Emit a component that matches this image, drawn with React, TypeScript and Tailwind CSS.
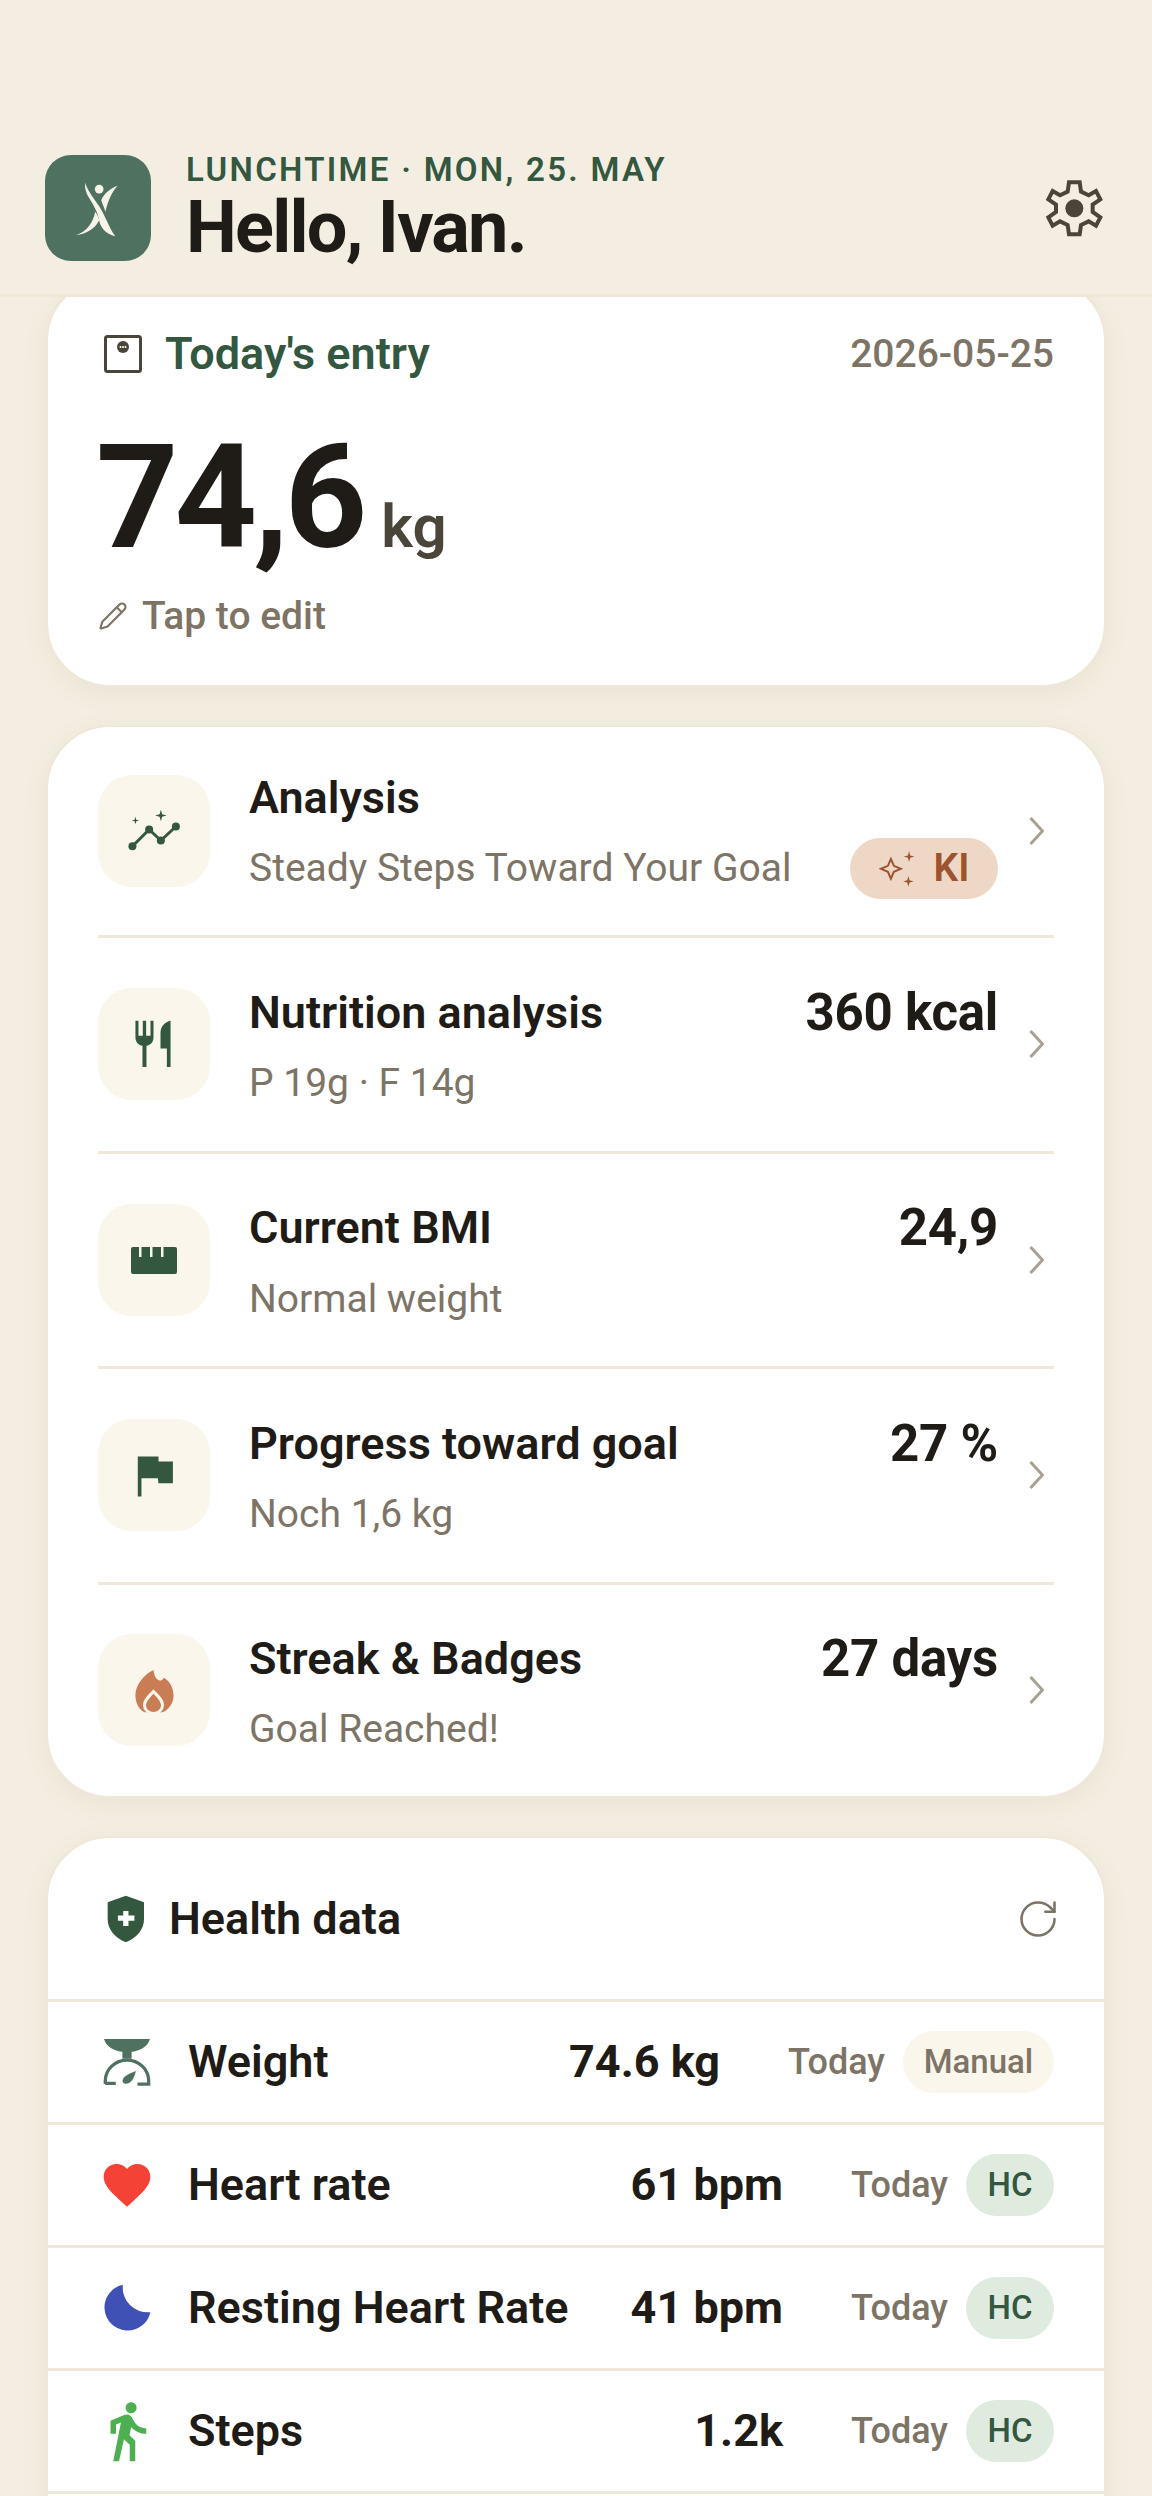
import type { ReactNode } from 'react'
import { MdDirectionsWalk, MdFavorite } from 'react-icons/md'
import { Pencil, RotateCw } from 'lucide-react'

const GREEN = '#34573f'

function Logo() {
  return (
    <div className="size-[106px] shrink-0 rounded-[26px] bg-[#4f7260]">
      <svg viewBox="45 45 317 317" className="size-full" fill="#f7f3e8">
        <circle cx="207" cy="147" r="13" />
        <path d="M165 128C172 150 190 175 205 195C225 225 235 260 255 288C235 283 215 270 208 245C203 215 190 195 178 175C168 160 163 145 165 128Z" />
        <path d="M262 137C240 145 222 160 213 180L226 215C232 185 245 155 262 137Z" />
        <path d="M195 215C190 245 170 275 138 285C170 280 195 265 207 240C205 230 200 222 195 215Z" />
      </svg>
    </div>
  )
}

function Gear() {
  return (
    <svg viewBox="70 55 180 180" className="size-[60px]" fill="none">
      <path
        d="M145 68H177L181 96L204 107L226 94L239 119L216 135V157L239 173L226 198L204 185L181 196L177 224H145L141 196L118 185L96 198L83 173L106 157V135L83 119L96 94L118 107L141 96Z"
        stroke="#4b4438"
        strokeWidth="12"
      />
      <circle cx="161" cy="146" r="27" fill="#4b4438" />
    </svg>
  )
}

function ScaleBox() {
  return (
    <svg viewBox="0 0 38 38" className="size-[38px] shrink-0" fill="none">
      <rect x="1.5" y="1.5" width="35" height="35" rx="2" stroke="#4b4438" strokeWidth="3" />
      <circle cx="19" cy="12" r="6" fill="#4b4438" />
      <circle cx="16.5" cy="12" r="1" fill="#fff" />
      <circle cx="19" cy="12" r="1" fill="#fff" />
      <circle cx="21.5" cy="12" r="1" fill="#fff" />
    </svg>
  )
}

function Star({ x, y, r, fill = GREEN }: { x: number; y: number; r: number; fill?: string }) {
  const k = r * 0.22
  return (
    <path
      d={`M${x} ${y - r}L${x + k} ${y - k}L${x + r} ${y}L${x + k} ${y + k}L${x} ${y + r}L${x - k} ${y + k}L${x - r} ${y}L${x - k} ${y - k}Z`}
      fill={fill}
    />
  )
}

function ChartIcon() {
  return (
    <svg viewBox="24 14 335 335" className="size-full" fill={GREEN}>
      <polyline points="127,227 177,177 212,210 257,168" fill="none" stroke={GREEN} strokeWidth="9" />
      <circle cx="127" cy="227" r="12" />
      <circle cx="177" cy="177" r="12" />
      <circle cx="212" cy="210" r="12" />
      <circle cx="257" cy="168" r="12" />
      <Star x={212} y={135} r={17} />
      <Star x={136} y={150} r={11} />
    </svg>
  )
}

function ForkIcon() {
  return (
    <svg viewBox="24 657 335 335" className="size-full" fill={GREEN}>
      <path d="M136 755H145V800H158V755H168V800H181V755H190V805C190 820 180 828 169 830V893H157V830C146 828 136 820 136 805Z" />
      <path d="M241 755V893H230V838H211V790C211 772 225 758 241 755Z" />
    </svg>
  )
}

function RulerIcon() {
  return (
    <svg viewBox="0 0 112 112" className="size-full">
      <path
        fill={GREEN}
        d="M35 43H77A2 2 0 0 1 79 45V68A2 2 0 0 1 77 70H35A2 2 0 0 1 33 68V45A2 2 0 0 1 35 43ZM41 43V53H43.5V43ZM52 43V53H54.5V43ZM63 43V53H65.5V43Z"
        fillRule="evenodd"
      />
    </svg>
  )
}

function FlagIcon() {
  return (
    <svg viewBox="24 30 335 335" className="size-full" fill={GREEN}>
      <path d="M143 142H205V157H248V222H205L203 207H154V262H143Z" />
    </svg>
  )
}

function FlameIcon() {
  return (
    <svg viewBox="24 677 335 335" className="size-full">
      <path
        fill="#c97d55"
        d="M190 785C192 805 200 820 215 815C220 812 220 808 222 808C240 820 250 840 250 862C250 885 235 905 215 912H165C148 905 136 885 136 860C136 830 160 800 190 785Z"
      />
      <path
        fill="none"
        stroke="#faf6ec"
        strokeWidth="9"
        d="M190 849C175 865 163 875 163 890C163 903 175 915 190 915C205 915 217 903 217 890C217 875 205 865 190 849Z"
      />
      <rect x="150" y="912" width="80" height="10" fill="#faf6ec" />
    </svg>
  )
}

function KiSparkle() {
  return (
    <svg viewBox="120 80 110 115" className="h-[38px] w-[37px]" fill="none">
      <path d="M155 107L164 128L185 137L164 146L155 167L146 146L125 137L146 128Z" stroke="#9c5330" strokeWidth="6" />
      <Star x={210} y={100} r={16} fill="#9c5330" />
      <Star x={208} y={175} r={16} fill="#9c5330" />
    </svg>
  )
}

function ShieldIcon() {
  return (
    <svg viewBox="50 52 115 145" className="h-[48px] w-[38px] shrink-0">
      <path fill={GREEN} d="M107 54L162 74V125C162 155 140 182 107 195C74 182 52 155 52 125V74Z" />
      <path fill="#fff" d="M99 100H115V114H133V130H115V146H99V130H83V114H99Z" />
    </svg>
  )
}

function WeighIcon() {
  return (
    <svg viewBox="65 55 146 146" className="size-[48px] shrink-0" fill="#4f7260">
      <path d="M68 58H208C200 85 172 95 152 97V118H124V97C104 95 76 85 68 58Z" />
      <path
        d="M72 195V185C72 150 102 122 138 122C174 122 204 150 204 185V195H170M72 193H104"
        fill="none"
        stroke="#4f7260"
        strokeWidth="10"
      />
      <path d="M165 155C160 180 148 195 133 194C122 192 122 180 132 172C140 165 152 160 165 155Z" />
    </svg>
  )
}

function MoonIcon() {
  return (
    <svg viewBox="65 795 145 145" className="size-[48px] shrink-0" fill="#3f51b5">
      <path d="M125 797A70 70 0 1 0 208 880A75 75 0 0 1 125 797Z" />
    </svg>
  )
}

function Chevron() {
  return (
    <svg viewBox="0 0 15 28" className="ml-[31px] mr-[10px] h-[28px] w-[15px] shrink-0" fill="none">
      <polyline points="1.5,1 13.5,14 1.5,27" stroke="#a8a090" strokeWidth="3" />
    </svg>
  )
}

function NavRow({
  icon,
  title,
  sub,
  value,
  trailing,
}: {
  icon: ReactNode
  title: string
  sub: string
  value?: string
  trailing?: ReactNode
}) {
  return (
    <div className="mx-[50px] flex h-[215.5px] items-center border-b-[3px] border-[#efe7d8] first:h-[211px] last:h-[211.5px] last:border-b-0">
      <div className="size-[112px] shrink-0 rounded-[34px] bg-[#faf6ec]">{icon}</div>
      <div className={value ? 'mt-[3px] ml-[39px] min-w-0 flex-1' : 'ml-[39px] min-w-0 flex-1'}>
        <div className="flex items-center justify-between">
          <span className="text-[45px] leading-[56px] font-semibold text-[#1f1b16]">{title}</span>
          {value && <span className="text-[51px] leading-[56px] font-bold tracking-[-0.25px] text-[#1f1b16]">{value}</span>}
        </div>
        <div className="mt-[19px] flex h-[47px] items-center justify-between">
          <span className="text-[39px] text-[#7d7466]">{sub}</span>
          {trailing}
        </div>
      </div>
      <Chevron />
    </div>
  )
}

function DataRow({
  icon,
  name,
  value,
  pill,
  manual,
}: {
  icon: ReactNode
  name: string
  value: string
  pill: string
  manual?: boolean
}) {
  return (
    <div className="flex h-[123px] items-center border-t-[3px] border-[#efe7d8] pr-[50px] pl-[55px]">
      <div className="flex w-[48px] shrink-0 justify-center">{icon}</div>
      <span className="ml-[37px] flex-1 text-[45px] font-semibold text-[#1f1b16]">{name}</span>
      <span className="text-[45px] font-bold text-[#1f1b16]">{value}</span>
      <span className="ml-[68px] text-[36px] font-medium text-[#7d7466]">Today</span>
      <span
        className={
          manual
            ? 'ml-[18px] flex h-[62px] w-[151px] items-center justify-center rounded-full bg-[#faf6ec] text-[33px] font-medium text-[#7d7466]'
            : 'ml-[18px] flex h-[62px] w-[88px] items-center justify-center rounded-full bg-[#deebde] text-[33px] font-medium text-[#34573f]'
        }
      >
        {pill}
      </span>
    </div>
  )
}

const cardClass =
  'mx-[46px] overflow-hidden rounded-[64px] border-[2px] border-[#efe7d8] bg-white shadow-[0_6px_24px_rgba(120,100,60,0.08)]'

export default function App() {
  return (
    <div className="flex h-[2496px] flex-col overflow-hidden bg-[#f4eee2] font-['Roboto',sans-serif]">
      <header className="z-10 flex h-[297px] shrink-0 items-start justify-between border-b-[3px] border-[#efe7d8] bg-[#f4eee2] pt-[155px] pr-[48px] pl-[45px]">
        <div className="flex items-start gap-[35px]">
          <Logo />
          <div>
            <div className="text-[33px] leading-[30px] font-semibold tracking-[2.3px] text-[#34573f]">
              LUNCHTIME · MON, 25. MAY
            </div>
            <h1 className="mt-[5px] text-[72px] leading-[76px] font-bold tracking-[-1.75px] text-[#1f1b16]">Hello, Ivan.</h1>
          </div>
        </div>
        <div className="mt-[23px]">
          <Gear />
        </div>
      </header>

      <main className="flex flex-col gap-[38px]">
        <section className={`${cardClass} -mt-[20px] h-[410px] px-[50px] pt-[41px]`}>
          <div className="flex items-center justify-between">
            <div className="flex items-center gap-[23px] pl-[6px]">
              <ScaleBox />
              <span className="text-[45px] font-semibold text-[#34573f]">Today's entry</span>
            </div>
            <span className="text-[39px] font-medium text-[#7d7466]">2026-05-25</span>
          </div>
          <div className="mt-[26px] -ml-[2px] flex items-baseline gap-[18px]">
            <span className="text-[144px] leading-[168px] font-bold tracking-[-4px] text-[#1f1b16]">74,6</span>
            <span className="text-[60px] font-semibold text-[#4b4438]">kg</span>
          </div>
          <div className="mt-[5px] flex items-center gap-[14px]">
            <Pencil size={30} color="#7d7466" strokeWidth={1.75} />
            <span className="text-[39px] font-medium text-[#7d7466]">Tap to edit</span>
          </div>
        </section>

        <section className={cardClass}>
          <NavRow
            icon={<ChartIcon />}
            title="Analysis"
            sub="Steady Steps Toward Your Goal"
            trailing={
              <span className="flex h-[61px] w-[148px] items-center justify-center gap-[18px] rounded-full bg-[#eed8c5] text-[39px] font-semibold text-[#9c5330]">
                <KiSparkle />
                KI
              </span>
            }
          />
          <NavRow icon={<ForkIcon />} title="Nutrition analysis" sub="P 19g · F 14g" value="360 kcal" />
          <NavRow icon={<RulerIcon />} title="Current BMI" sub="Normal weight" value="24,9" />
          <NavRow icon={<FlagIcon />} title="Progress toward goal" sub="Noch 1,6 kg" value="27 %" />
          <NavRow icon={<FlameIcon />} title="Streak & Badges" sub="Goal Reached!" value="27 days" />
        </section>

        <section className={cardClass}>
          <div className="flex h-[161px] items-center justify-between pr-[44px] pl-[59px]">
            <div className="flex items-center gap-[24px]">
              <ShieldIcon />
              <span className="text-[45px] font-semibold text-[#1f1b16]">Health data</span>
            </div>
            <RotateCw size={44} color="#7d7466" strokeWidth={1.4} />
          </div>
          <DataRow icon={<WeighIcon />} name="Weight" value="74.6 kg" pill="Manual" manual />
          <DataRow icon={<MdFavorite size={56} color="#f44336" className="shrink-0" />} name="Heart rate" value="61 bpm" pill="HC" />
          <DataRow icon={<MoonIcon />} name="Resting Heart Rate" value="41 bpm" pill="HC" />
          <DataRow icon={<MdDirectionsWalk size={66} color="#4caf50" className="shrink-0" />} name="Steps" value="1.2k" pill="HC" />
          <div className="h-[123px] border-t-[3px] border-[#efe7d8]" />
        </section>
      </main>
    </div>
  )
}
